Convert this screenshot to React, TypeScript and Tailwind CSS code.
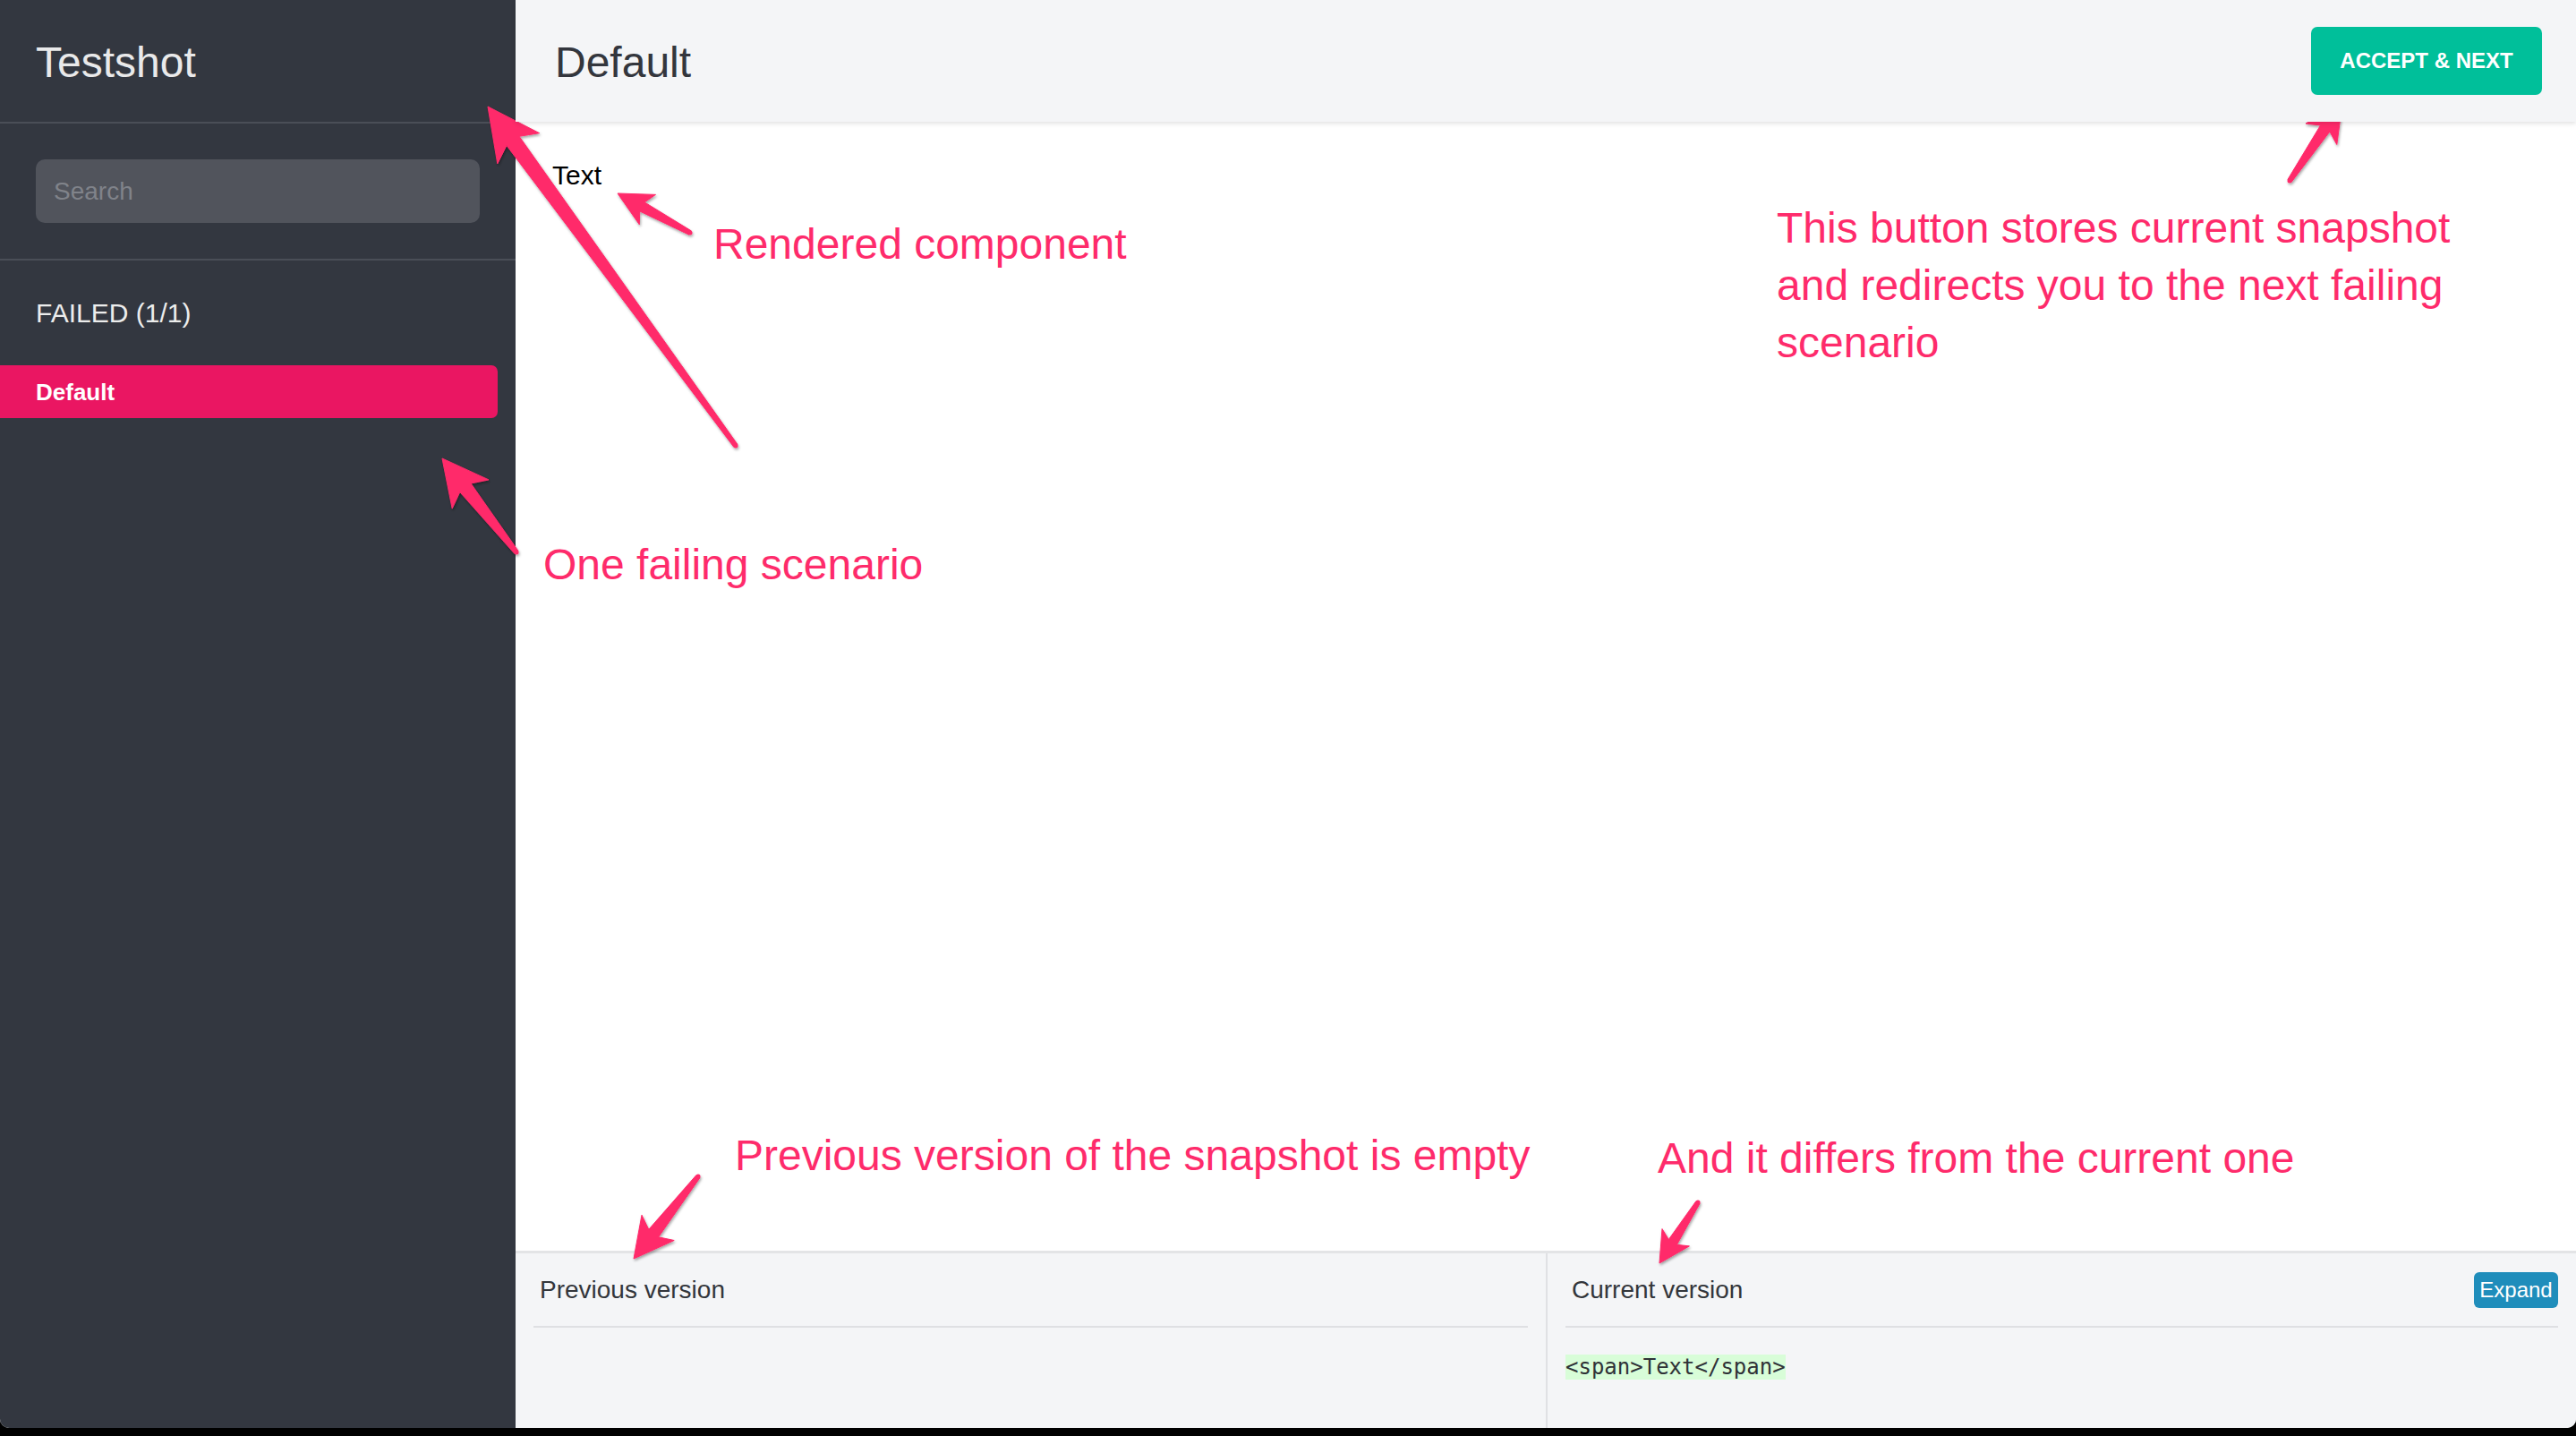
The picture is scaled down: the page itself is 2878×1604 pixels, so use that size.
import React from "react";

type Pt = [number, number];

interface ArrowSpec {
  tip: Pt;
  tail: Pt;
  head: number;
  wing: number;
}

const ARROWS: ArrowSpec[] = [
  { tip: [545, 119], tail: [822, 498], head: 58, wing: 29 },
  { tip: [690, 216], tail: [771, 260], head: 38, wing: 19 },
  { tip: [494, 512], tail: [577, 617], head: 51, wing: 26 },
  { tip: [2617, 115], tail: [2558, 202], head: 42, wing: 21 },
  { tip: [708, 1406], tail: [780, 1314], head: 44, wing: 23 },
  { tip: [1854, 1411], tail: [1897, 1343], head: 34, wing: 18 },
];

function arrowPoints({ tip, tail, head, wing }: ArrowSpec) {
  const dx = tail[0] - tip[0];
  const dy = tail[1] - tip[1];
  const len = Math.hypot(dx, dy);
  const ux = dx / len;
  const uy = dy / len;
  const nx = -uy;
  const ny = ux;
  const p = (a: number, b: number) =>
    `${(tip[0] + ux * a + nx * b).toFixed(1)},${(tip[1] + uy * a + ny * b).toFixed(1)}`;
  const neck = head * 0.82;
  const s = Math.max(wing * 0.3, 5);
  const t = 2.5;
  return [p(0, 0), p(head, wing), p(neck, s), p(len, t), p(len, -t), p(neck, -s), p(head, -wing)].join(" ");
}

function Annotations() {
  return (
    <div className="absolute inset-0 pointer-events-none">
      <svg width="2878" height="1604" className="absolute left-0 top-0">
        <defs>
          <filter id="arrowShadow" x="-20%" y="-20%" width="140%" height="140%">
            <feDropShadow dx="1" dy="2" stdDeviation="1.5" floodColor="#000" floodOpacity="0.35" />
          </filter>
        </defs>
        <g fill="#ff2a6a" filter="url(#arrowShadow)">
          {ARROWS.map((a, i) => (
            <g key={i}>
              <polygon points={arrowPoints(a)} strokeLinejoin="round" stroke="#ff2a6a" strokeWidth="1" />
              <circle cx={a.tail[0]} cy={a.tail[1]} r="2.5" />
            </g>
          ))}
        </g>
      </svg>
      <div className="absolute left-[797px] top-[249px] text-[48px] leading-none text-[#fe2b6b] whitespace-nowrap">
        Rendered component
      </div>
      <div className="absolute left-[1985px] top-[223px] text-[48px] leading-[64px] text-[#fe2b6b] whitespace-nowrap">
        This button stores current snapshot
        <br />
        and redirects you to the next failing
        <br />
        scenario
      </div>
      <div className="absolute left-[607px] top-[607px] text-[48px] leading-none text-[#fe2b6b] whitespace-nowrap">
        One failing scenario
      </div>
      <div className="absolute left-[821px] top-[1267px] text-[48px] leading-none text-[#fe2b6b] whitespace-nowrap">
        Previous version of the snapshot is empty
      </div>
      <div className="absolute left-[1852px] top-[1270px] text-[48px] leading-none text-[#fe2b6b] whitespace-nowrap">
        And it differs from the current one
      </div>
    </div>
  );
}

function Sidebar() {
  return (
    <aside className="w-[576px] shrink-0 bg-[#333740] flex flex-col">
      <div className="h-[138px] shrink-0 flex items-center px-[40px] pt-[4px] border-b-2 border-[#4a4e57]">
        <span className="text-[48px] leading-none text-[#e9e9ea]">Testshot</span>
      </div>
      <div className="px-[40px] py-[40px] border-b-2 border-[#4a4e57]">
        <input
          placeholder="Search"
          className="w-full h-[71px] rounded-[10px] bg-[#51545c] px-[20px] text-[28px] text-[#e0e0e0] placeholder:text-[#80838a] outline-none"
        />
      </div>
      <div className="pt-[44px] pl-[40px] text-[30px] leading-none text-[#ececec]">FAILED (1/1)</div>
      <div className="mt-[43px] w-[556px] h-[59px] rounded-r-[7px] bg-[#ea1662] flex items-center px-[40px]">
        <span className="text-[26px] font-bold leading-none text-white">Default</span>
      </div>
    </aside>
  );
}

function VersionColumn({ title, expand, code }: { title: string; expand?: boolean; code?: string }) {
  return (
    <div className="flex flex-col px-[20px]">
      <div className="h-[83px] flex items-center justify-between border-b-2 border-[#dfe0e3]">
        <span className="pl-[7px] text-[28px] leading-none text-[#33363b]">{title}</span>
        {expand && (
          <button className="w-[94px] h-[40px] rounded-[6px] bg-[#1f8dbb] text-[24px] leading-none text-white">
            Expand
          </button>
        )}
      </div>
      {code && (
        <div className="pt-[31px]">
          <code className="bg-[#d8fdd8] text-[24px] leading-[26px] text-[#2f3237] font-['DejaVu_Sans_Mono',monospace]">
            {code}
          </code>
        </div>
      )}
    </div>
  );
}

export default function App() {
  return (
    <div className="relative w-[2878px] h-[1604px] bg-black font-['Liberation_Sans',Arial,sans-serif] overflow-hidden">
      <div className="h-[1595px] flex rounded-b-[10px] overflow-hidden bg-white">
        <Sidebar />
        <main className="flex-1 flex flex-col min-w-0">
          <header className="relative z-10 h-[136px] shrink-0 bg-[#f4f5f7] flex items-center justify-between pl-[44px] pr-[38px] shadow-[0_2px_5px_rgba(0,0,0,0.12)]">
            <h1 className="pt-[4px] text-[48px] leading-none text-[#33363d]">Default</h1>
            <button className="w-[258px] h-[76px] rounded-[7px] bg-[#00bf9a] text-[24px] font-bold leading-none text-white">
              ACCEPT &amp; NEXT
            </button>
          </header>
          <section className="flex-1 bg-white pl-[41px] pt-[45px]">
            <span className="text-[30px] leading-none text-black">Text</span>
          </section>
          <div className="h-[198px] shrink-0 grid grid-cols-[1153px_1fr] bg-[#f4f5f7] border-t-[3px] border-[#e3e4e6]">
            <div className="border-r-2 border-[#e0e1e4]">
              <VersionColumn title="Previous version" />
            </div>
            <VersionColumn title="Current version" expand code="<span>Text</span>" />
          </div>
        </main>
      </div>
      <Annotations />
    </div>
  );
}
